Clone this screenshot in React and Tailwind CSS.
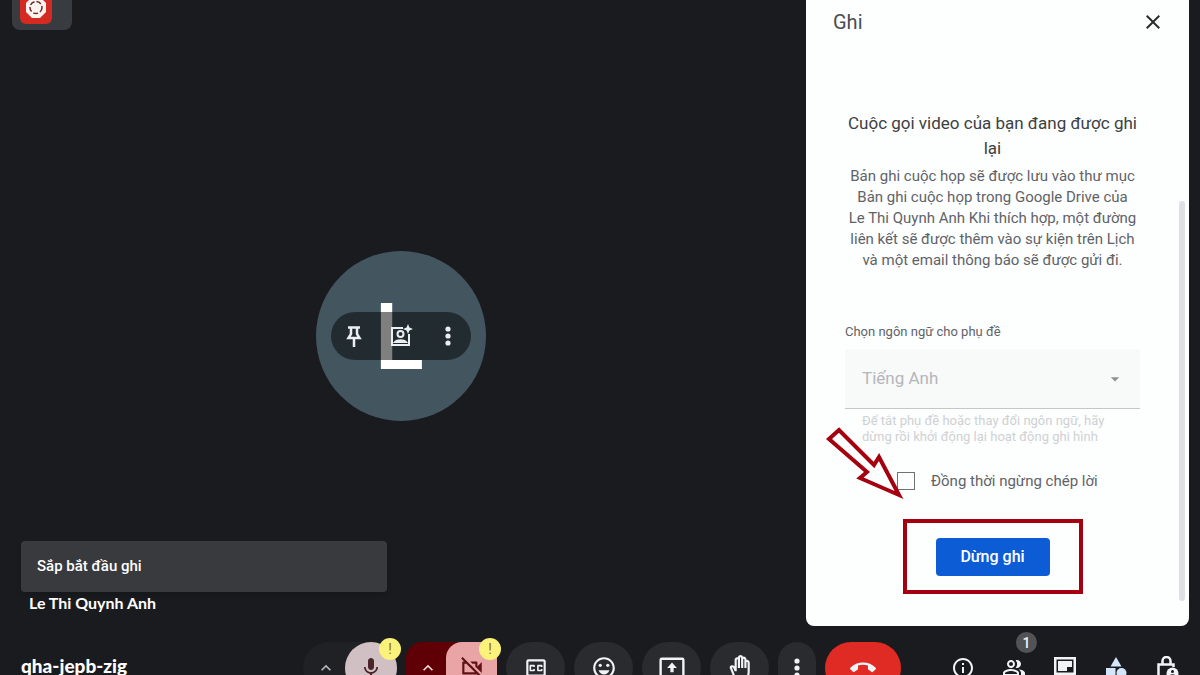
import React, { useState } from 'react';
import {
    MdMic,
    MdOutlineVideocamOff,
    MdOutlineClosedCaption,
    MdOutlineEmojiEmotions,
    MdOutlineBackHand,
    MdCallEnd,
    MdInfoOutline,
    MdOutlinePeopleAlt,
    MdExpandLess,
    MdClose,
    MdArrowDropDown,
} from 'react-icons/md';

// Icons that the material set does not have, or has too thin
const PinIcon = () => (
    <svg viewBox="0 0 24 24" className="h-6 w-6" fill="none" stroke="currentColor" strokeWidth="2.500">
        <path d="M6 3.500h12M9 3.500V10l-2.500 4h11L15 10V3.500M12 14v9" />
    </svg>
);

const DotsIcon = () => (
    <svg viewBox="0 0 24 24" className="h-6 w-6" fill="currentColor">
        <circle cx="12" cy="5" r="2.600" />
        <circle cx="12" cy="12" r="2.600" />
        <circle cx="12" cy="19" r="2.600" />
    </svg>
);

const PresentIcon = ({ className }) => (
    <svg viewBox="0 0 24 24" className={className} fill="none" stroke="currentColor" strokeWidth="2.200">
        <rect x="1.500" y="3.500" width="21" height="17" rx="1" />
        <path d="M12 7l4.500 5H13.500v4h-3v-4H7.500z" fill="currentColor" stroke="none" />
    </svg>
);

const FrameEffectIcon = () => (
    <svg viewBox="0 0 24 24" className="h-6 w-6" fill="none" stroke="currentColor" strokeWidth="2">
        <path d="M14 4H3v17h17V10" />
        <circle cx="11.500" cy="10" r="3" />
        <path d="M6 18c2-2.500 9-2.500 11 0z" />
        <path d="M19 0l1.400 3.600L24 5l-3.600 1.400L19 10l-1.400-3.600L14 5l3.600-1.400z" fill="currentColor" stroke="none" />
    </svg>
);

const ChatIcon = () => (
    <svg viewBox="0 0 24 24" className="h-6 w-6" fill="currentColor">
        <path fillRule="evenodd" d="M1 1h22v18H6l-5 4zM3.500 3.500v13h17v-13z" />
        <path d="M5 5h14v6h-5v4H5z" />
    </svg>
);

const ActivitiesIcon = () => (
    <svg viewBox="0 0 24 24" className="h-6 w-6" fill="#d3e6fb">
        <path d="M12 1l5.500 9.500h-11z" />
        <path d="M2 12h9.500v9.500H2z" />
        <circle cx="17.500" cy="17" r="5" />
    </svg>
);

const HostLockIcon = () => (
    <svg viewBox="0 0 24 24" className="h-6 w-6" fill="none" stroke="currentColor" strokeWidth="2.500">
        <path d="M7.500 8.500V5a4 4 0 0 1 8 0v3.500" />
        <path d="M11 21H3.500V8.500h15V11" />
        <circle cx="17.500" cy="17.500" r="6" fill="currentColor" stroke="none" />
        <circle cx="17.500" cy="15.500" r="1.500" fill="#1a1b1e" stroke="none" />
        <path d="M15 20c1-1.500 4-1.500 5 0" stroke="#1a1b1e" strokeWidth="1.500" />
    </svg>
);

const RecordIcon = () => (
    <svg viewBox="0 0 24 24" className="h-6 w-6">
        <path d="M8 1h8l6 6v9l-6 6H8l-6-6V7z" fill="#fff3ef" />
        <circle cx="12" cy="11.500" r="6" fill="none" stroke="#6b2a2a" strokeWidth="1.500" strokeDasharray="5 2" />
    </svg>
);

const controls = [
    { label: 'Phụ đề', icon: MdOutlineClosedCaption },
    { label: 'Biểu tượng cảm xúc', icon: MdOutlineEmojiEmotions },
    { label: 'Trình bày', icon: PresentIcon },
    { label: 'Giơ tay', icon: MdOutlineBackHand },
];

const sideTools = [
    { label: 'Chi tiết cuộc họp', icon: MdInfoOutline },
    { label: 'Mọi người', icon: MdOutlinePeopleAlt, count: 1 },
    { label: 'Trò chuyện', icon: ChatIcon },
    { label: 'Hoạt động', icon: ActivitiesIcon },
    { label: 'Kiểm soát', icon: HostLockIcon },
];

const Warning = () => (
    <span className="absolute -top-1 -right-1 flex h-[22px] w-[22px] items-center justify-center rounded-full bg-[#fbf27c] text-sm text-[#8a6d1a]">
        !
    </span>
);

const Stage = () => (
    <main className="relative flex min-w-0 flex-1 items-center justify-center pt-[46px] pr-1">
        <div className="absolute top-0 left-3 flex h-[30px] w-[60px] items-start rounded-b-lg bg-[#383b3f] pl-2">
            <div className="flex h-6 w-8 items-end justify-center overflow-hidden rounded-b-md bg-[#d32a22] pb-1">
                <RecordIcon />
            </div>
        </div>

        <div className="relative flex h-[170px] w-[170px] items-center justify-center rounded-full bg-[#435660]">
            <span className="pt-1 pr-1 text-[92px] leading-none font-medium text-white">L</span>
            <div className="absolute inset-x-[15px] top-[61px] flex h-12 items-center justify-around rounded-full bg-black/50 text-[#eceff1]">
                <button type="button" aria-label="Ghim"><PinIcon /></button>
                <button type="button" aria-label="Hiệu ứng"><FrameEffectIcon /></button>
                <button type="button" aria-label="Tùy chọn khác"><DotsIcon /></button>
            </div>
        </div>

        <div className="absolute bottom-3 left-[21px] w-[366px] text-white">
            <div className="flex h-[51px] items-center rounded bg-[#393a3d] px-4 text-[15px] font-medium shadow-md">
                Sắp bắt đầu ghi
            </div>
            <div className="px-2 font-[Lato] text-base leading-[22px] font-bold">Le Thi Quynh Anh</div>
        </div>
    </main>
);

const RecordPanel = () => {
    const [stopTranscript, setStopTranscript] = useState(false);

    return (
        <aside className="relative mr-[11px] flex w-[383px] flex-col rounded-b-lg bg-[#fdfefe] text-[#5f6368]">
            <header className="flex h-11 items-center justify-between pr-6 pl-[27px]">
                <h2 className="text-xl text-[#4a4c50]">Ghi</h2>
                <button type="button" aria-label="Đóng" className="text-[#2b2c2e]">
                    <MdClose className="h-6 w-6" />
                </button>
            </header>

            <div className="flex flex-col pt-[67px] pr-[49px] pl-[39px]">
                <h3 className="text-center text-[17px] leading-[25px] text-[#3c4043]">
                    Cuộc gọi video của bạn đang được ghi lại
                </h3>
                <p className="mt-[5px] text-center text-[15px] leading-[21px]">
                    Bản ghi cuộc họp sẽ được lưu vào thư mục Bản ghi cuộc họp trong Google Drive của
                    <br />
                    Le Thi Quynh Anh Khi thích hợp, một đường liên kết sẽ được thêm vào sự kiện trên Lịch
                    và một email thông báo sẽ được gửi đi.
                </p>

                <label htmlFor="caption-lang" className="mt-[51px] text-[13px] leading-5">
                    Chọn ngôn ngữ cho phụ đề
                </label>
                <div className="relative mt-[7px]">
                    <select
                        id="caption-lang"
                        disabled
                        className="h-[60px] w-full appearance-none border-b border-[#c4c6c8] bg-[#f8f9f9] px-[17px] text-[17px] text-[#b4b6b9] opacity-100"
                    >
                        <option>Tiếng Anh</option>
                    </select>
                    <MdArrowDropDown className="pointer-events-none absolute top-5 right-[15px] h-5 w-5 text-[#8d8f92]" />
                </div>
                <p className="mt-1 pr-5 pl-[17px] text-[13px] leading-4 text-[#cfd1d3]">
                    Để tắt phụ đề hoặc thay đổi ngôn ngữ, hãy dừng rồi khởi động lại hoạt động ghi hình
                </p>

                <label className="mt-[26px] flex items-center gap-4 pl-[52px] text-[15px] leading-5">
                    <input
                        type="checkbox"
                        checked={stopTranscript}
                        onChange={(e) => setStopTranscript(e.target.checked)}
                        className="h-[18px] w-[18px] appearance-none border border-[#6f7174] checked:bg-[#0b5cd5]"
                    />
                    Đồng thời ngừng chép lời
                </label>

                <div className="mt-7 flex h-[75px] w-[180px] items-center justify-center self-center border-4 border-[#a5000f]">
                    <button
                        type="button"
                        className="h-[38px] w-[114px] rounded bg-[#0b5cd5] text-base font-medium text-white"
                    >
                        Dừng ghi
                    </button>
                </div>
            </div>

            {/* scrollbar thumb */}
            <div className="absolute top-[201px] right-1 h-[400px] w-1.5 rounded-sm bg-[#dfe0e3]" />

            {/* arrow pointing at the stop button */}
            <svg
                viewBox="0 0 80 76"
                className="absolute top-[425px] left-[19px] h-[76px] w-20"
                fill="none"
                stroke="#a5000f"
                strokeWidth="4"
            >
                <path d="M14 5L4 14L42 47L35 53L74 70L54 32L49 40Z" />
            </svg>
        </aside>
    );
};

const ControlBar = () => (
    <footer className="grid h-[49px] shrink-0 grid-cols-[1fr_auto_1fr] items-start overflow-hidden pt-4 text-[#f1f3f4]">
        <div className="pt-[15px] pl-[21px] font-[Lato] text-[19px] leading-[18px] font-black text-white">qha-jepb-zig</div>

        <div className="flex gap-[9px] pl-1">
            <div className="relative flex h-[52px] w-[94px] rounded-full bg-[#202124]">
                <button type="button" aria-label="Cài đặt âm thanh" className="flex flex-1 items-center justify-center pl-1">
                    <MdExpandLess className="h-5 w-5 text-[#b8babd]" />
                </button>
                <button
                    type="button"
                    aria-label="Micrô"
                    className="flex h-[52px] w-[52px] items-center justify-center rounded-full bg-[#d0bfc3] text-[#4a2428]"
                >
                    <MdMic className="h-6 w-6" />
                </button>
                <Warning />
            </div>

            <div className="relative flex h-[52px] w-[91px] rounded-2xl bg-[#5f0006]">
                <button type="button" aria-label="Cài đặt video" className="flex flex-1 items-center justify-center pl-1">
                    <MdExpandLess className="h-5 w-5 text-[#fbdcdc]" />
                </button>
                <button
                    type="button"
                    aria-label="Máy ảnh"
                    className="flex h-[52px] w-[51px] items-center justify-center rounded-2xl bg-[#e9a5a5] text-[#5f1216]"
                >
                    <MdOutlineVideocamOff className="h-[26px] w-[26px]" />
                </button>
                <Warning />
            </div>

            {controls.map(({ label, icon: Icon }) => (
                <button
                    key={label}
                    type="button"
                    aria-label={label}
                    className="flex h-[52px] w-[59px] items-center justify-center rounded-full bg-[#292b2e]"
                >
                    <Icon className="h-[26px] w-[26px]" />
                </button>
            ))}

            <button
                type="button"
                aria-label="Tùy chọn khác"
                className="flex h-[52px] w-[38px] items-center justify-center rounded-full bg-[#292b2e]"
            >
                <DotsIcon />
            </button>
            <button
                type="button"
                aria-label="Rời khỏi cuộc gọi"
                className="flex h-[52px] w-[76px] items-center justify-center rounded-full bg-[#e02a24]"
            >
                <MdCallEnd className="h-[26px] w-[26px]" />
            </button>
        </div>

        <div className="flex justify-end pr-2">
            {sideTools.map(({ label, icon: Icon, count }) => (
                <button
                    key={label}
                    type="button"
                    aria-label={label}
                    className="relative flex h-[52px] w-[51px] items-center justify-center"
                >
                    <Icon className="h-6 w-6" />
                    {count && (
                        <span className="absolute -top-2.5 right-0.5 flex h-[21px] w-[21px] items-center justify-center rounded-full bg-[#525355] text-sm font-medium">
                            {count}
                        </span>
                    )}
                </button>
            ))}
        </div>
    </footer>
);

const App = () => {
    return (
        <div className="flex h-screen flex-col overflow-hidden bg-[#1a1b1e] font-[Roboto,sans-serif]">
            <div className="flex min-h-0 flex-1">
                <Stage />
                <RecordPanel />
            </div>
            <ControlBar />
        </div>
    );
};

export default App;
